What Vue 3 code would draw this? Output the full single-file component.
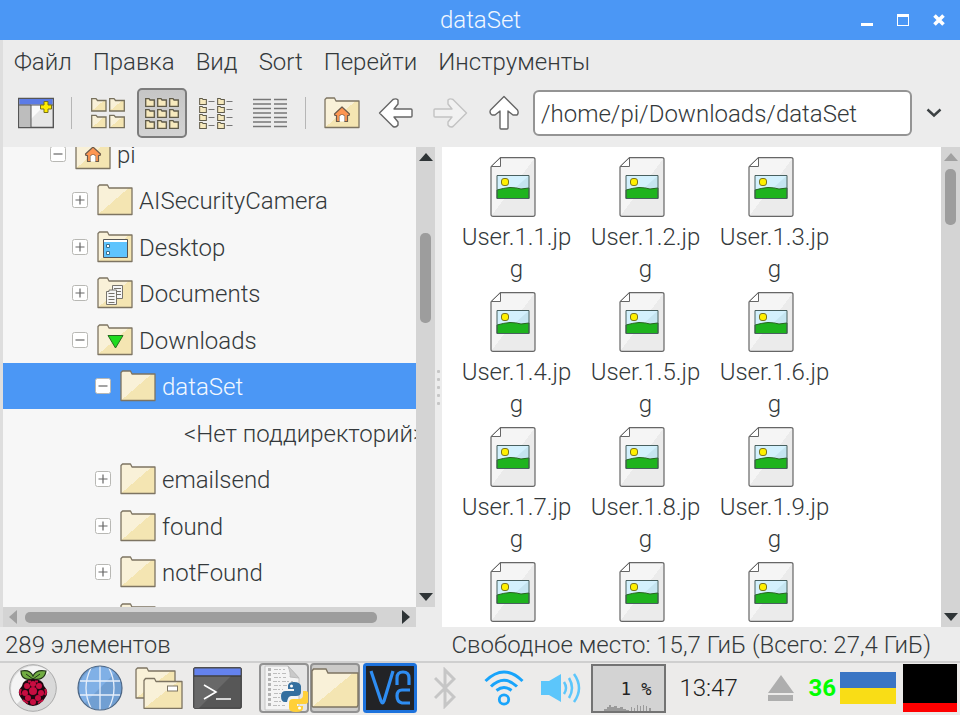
<script setup>
import { ref } from 'vue'

const path = ref('/home/pi/Downloads/dataSet')
const menus = ['Файл', 'Правка', 'Вид', 'Sort', 'Перейти', 'Инструменты']

const tree = [
  { name: 'pi', level: 0, open: true, emblem: 'home' },
  { name: 'AISecurityCamera', level: 1 },
  { name: 'Desktop', level: 1, emblem: 'desktop' },
  { name: 'Documents', level: 1, emblem: 'documents' },
  { name: 'Downloads', level: 1, open: true, emblem: 'downloads' },
  { name: 'dataSet', level: 2, open: true, selected: true },
  { name: '<Нет поддиректорий>', level: 3, empty: true },
  { name: 'emailsend', level: 2 },
  { name: 'found', level: 2 },
  { name: 'notFound', level: 2 },
  { name: '', level: 2 }
]

const named = Array.from({ length: 9 }, (_, i) => `User.1.${i + 1}.jpg`)
const files = [...named, '', '', '']
const small = [0, 12, 24]
const listRows = [0, 1, 2, 3]
const drupelets = [
  [24, 20, 3], [18, 22, 3], [30, 22, 3], [24, 27, 4], [16, 29, 3], [32, 29, 3],
  [19, 34, 3], [29, 34, 3], [24, 38, 3]
]
</script>

<template>
  <div class="desktop">
    <svg class="defs" aria-hidden="true">
      <defs>
        <linearGradient id="paper" x1="0" y1="0" x2="1" y2="1">
          <stop offset="0.5" stop-color="#f5f5f5" /><stop offset="0.5" stop-color="#ebebeb" />
        </linearGradient>
        <linearGradient id="manila" x1="0" y1="0" x2="1" y2="1">
          <stop offset="0.5" stop-color="#f9f1d8" /><stop offset="0.5" stop-color="#f4e5b2" />
        </linearGradient>
        <symbol id="folder" viewBox="0 0 36 32">
          <path d="M1 2.500 2.500 1H10.500L12 4H35V30.500H1Z" fill="url(#manila)" stroke="#7d7462" stroke-width="1.300" stroke-linejoin="round" />
        </symbol>
        <symbol id="house" viewBox="0 0 18 18">
          <path d="M9 1 1.500 8 2 9.500H3.500V15.500H6.500V10.500L8 9H10L11.500 10.500V15.500H14.500V9.500H16L16.500 8Z" fill="#fd9652" stroke="#6c5a4b" stroke-width="1.200" stroke-linejoin="round" />
          <path d="M6.500 15.500V10.500L8 9H10L11.500 10.500V15.500Z" fill="#fff" />
        </symbol>
        <symbol id="mini" viewBox="0 0 10 9">
          <path d="M.7 .7H4L5 2H9.300V8.300H.7Z" fill="#f6e9bd" stroke="#5f5a48" stroke-width="1.300" />
        </symbol>
        <symbol id="arrow" viewBox="0 0 36 32">
          <path d="M1.500 16 15 2.500Q18 1 20 3V7L16 12H33Q34 12 34 13V19Q34 20 33 20H16L20 25V28Q18 31 15 29.500Z" fill="#fff" stroke="#666" stroke-width="1.400" stroke-linejoin="round" />
        </symbol>
      </defs>
    </svg>

    <header class="titlebar">
      <h1>dataSet</h1>
      <div class="winbtns">
        <button aria-label="Minimize"><svg width="12" height="12"><path d="M0 9h12v3H0z" fill="#fff" /></svg></button>
        <button aria-label="Maximize"><svg width="12" height="12"><path d="M0 0h12v12H0zM1 3v8h10V3z" fill="#fff" fill-rule="evenodd" /></svg></button>
        <button aria-label="Close"><svg width="12" height="12"><path d="M1.500 1.500 10.500 10.500M10.500 1.500 1.500 10.500" stroke="#fff" stroke-width="3.600" /></svg></button>
      </div>
    </header>

    <nav class="menubar">
      <button v-for="m in menus" :key="m">{{ m }}</button>
    </nav>

    <div class="toolbar">
      <button class="tool" aria-label="New window">
        <svg width="36" height="32" viewBox="0 0 36 32">
          <path d="M.7 1.500H35.300V30.500H.7Z" fill="#e6e6e6" stroke="#555" stroke-width="1.400" />
          <path d="M1.400 7H13V30H1.400Z" fill="#bdbdbd" /><path d="M13 7H28L13 22Z" fill="#fafafa" />
          <path d="M1.400 2H34.600V7.500H1.400Z" fill="#5b7be6" /><path d="M1 8H35M13 8V30" stroke="#555" />
          <path d="M26 4.500H30V8H33.500V12H30V15.500H26V12H22.500V8H26Z" fill="#ffec00" stroke="#77701a" />
        </svg>
      </button>
      <span class="sep"></span>
      <button class="tool" aria-label="Icon view">
        <svg width="34" height="32" viewBox="0 0 34 32">
          <g fill="url(#manila)" stroke="#77705c" stroke-width="1.300">
            <path d="M.7 1.700H5L6.500 3.500H15V14H.7Z" /><path d="M18.700 1.700H23L24.500 3.500H33.300V14H18.700Z" />
            <path d="M.7 18.300H5L6.500 20H15V30.700H.7Z" /><path d="M18.700 18.300H23L24.500 20H33.300V30.700H18.700Z" />
          </g>
        </svg>
      </button>
      <button class="tool pressed" aria-label="Small icon view" aria-pressed="true">
        <svg width="34" height="32" viewBox="0 0 34 32">
          <template v-for="y in small" :key="y">
            <use v-for="x in small" :key="x" href="#mini" :x="x" :y="y - y / 12 + 1" width="10" height="9" />
          </template>
        </svg>
      </button>
      <button class="tool" aria-label="Compact view">
        <svg width="34" height="32" viewBox="0 0 34 32">
          <g v-for="r in listRows" :key="r">
            <use href="#mini" x="0" :y="r * 8 + 1" width="8" height="7" />
            <use href="#mini" x="18" :y="r * 8 + 1" width="8" height="7" />
            <path :d="`M9.500 ${r * 8 + 4.500}h6M27.500 ${r * 8 + 4.500}h6`" stroke="#777" />
          </g>
        </svg>
      </button>
      <button class="tool" aria-label="Detailed view">
        <svg width="34" height="32" viewBox="0 0 34 32">
          <path d="M0 2.500H18M21 2.500H34M0 7H18M21 7H34M0 11.500H18M21 11.500H34M0 16H18M21 16H34M0 20.500H18M21 20.500H34M0 25H18M21 25H34M0 29.500H18M21 29.500H34" stroke="#777" stroke-width="1.300" />
        </svg>
      </button>
      <span class="sep"></span>
      <button class="tool" aria-label="Home">
        <svg width="36" height="32" viewBox="0 0 36 32"><use href="#folder" width="36" height="32" /><use href="#house" x="9" y="9" width="18" height="18" /></svg>
      </button>
      <button class="tool" aria-label="Back"><svg width="36" height="32"><use href="#arrow" width="36" height="32" /></svg></button>
      <button class="tool faded" aria-label="Forward"><svg width="36" height="32" viewBox="0 0 36 32"><use href="#arrow" width="36" height="32" transform="matrix(-1 0 0 1 36 0)" /></svg></button>
      <button class="tool" aria-label="Up"><svg width="32" height="36" viewBox="0 0 32 36"><use href="#arrow" width="36" height="32" transform="matrix(0 1 -1 0 32 0)" /></svg></button>
      <input v-model="path" class="address" type="text" aria-label="Path" />
      <button class="drop" aria-label="Path history"><svg width="16" height="10"><path d="M1.500 1.500 8 7.500 14.500 1.500" fill="none" stroke="#3c4143" stroke-width="2.400" /></svg></button>
    </div>

    <main class="panes">
      <section class="side">
        <ul class="tree">
          <li v-for="(n, i) in tree" :key="i" :class="['node', 'l' + n.level, { selected: n.selected }]">
            <button v-if="!n.empty" class="expander" :aria-label="n.open ? 'Collapse' : 'Expand'">
              <svg width="16" height="16" viewBox="0 0 16 16">
                <rect x=".5" y=".5" width="15" height="15" rx="2" fill="#fff" stroke="#b8b8b4" />
                <path :d="n.open ? 'M3.500 8H12.500' : 'M3.500 8H12.500M8 3.500V12.500'" stroke="#666" stroke-width="1.200" />
              </svg>
            </button>
            <svg v-if="!n.empty" class="folder" width="36" height="32" viewBox="0 0 36 32">
              <use href="#folder" width="36" height="32" />
              <use v-if="n.emblem === 'home'" href="#house" x="9" y="8" width="18" height="18" />
              <g v-if="n.emblem === 'desktop'">
                <path d="M6.500 8.500H30.500V26.500H6.500Z" fill="#5fc4fd" stroke="#555" /><path d="M7 9H30V11H7Z" fill="#fff" />
                <path d="M9.500 13.500H12.500V16.500H9.500ZM9.500 20.500H12.500V23.500H9.500Z" fill="#fff" stroke="#39708c" />
              </g>
              <g v-if="n.emblem === 'documents'" fill="#f6f6f6" stroke="#77746c">
                <path d="M15.500 8.500H25.500V21.500H15.500Z" /><path d="M17 11.500H24M19 14.500H24M19 17.500H24" />
                <path d="M9.500 14.500H12V13H19.500V27.500H9.500Z" /><path d="M11.500 16.500H17.500M11.500 19.500H17.500M11.500 22.500H17.500M11.500 25.500H17.500" />
              </g>
              <path v-if="n.emblem === 'downloads'" d="M11 11.500H26L18.500 24Z" fill="#1fdb1f" stroke="#276a20" />
            </svg>
            <span v-if="n.name" class="label">{{ n.name }}</span>
          </li>
        </ul>
        <div class="vbar">
          <button aria-label="Scroll up"><svg width="14" height="8"><path d="M0 8 7 0 14 8Z" fill="#2e3436" /></svg></button>
          <div class="track"><i class="thumb tree-thumb"></i></div>
          <button aria-label="Scroll down"><svg width="14" height="8"><path d="M0 0H14L7 8Z" fill="#2e3436" /></svg></button>
        </div>
        <div class="hbar">
          <button aria-label="Scroll left"><svg width="8" height="14"><path d="M8 0V14L0 7Z" fill="#a0a0a0" /></svg></button>
          <div class="htrack"><i class="hthumb"></i></div>
          <button aria-label="Scroll right"><svg width="8" height="14"><path d="M0 0V14L8 7Z" fill="#2e3436" /></svg></button>
        </div>
      </section>

      <div class="grip"><i></i><i></i><i></i><i></i><i></i></div>

      <section class="view">
        <ul class="files">
          <li v-for="(f, i) in files" :key="i">
            <svg width="46" height="60" viewBox="0 0 46 60">
              <path d="M10.500 .7H43Q45 .7 45 2.500V57.500Q45 59.300 43 59.300H3Q1 59.300 1 57.500V10Z" fill="url(#paper)" stroke="#666" stroke-width="1.200" />
              <path d="M10.500 .7V9.500H1.200Z" fill="#fff" stroke="#666" />
              <path d="M7 18.500H39V41.500H7Z" fill="#d3f1fd" /><path d="M39 18.500V32H24Z" fill="#c5e5f0" />
              <path d="M7 33Q14 31 20 30.500Q26 30.500 31 32L39 31V41.500H7Z" fill="#1eb31e" stroke="#27631f" />
              <path d="M7 18.500H39V41.500H7Z" fill="none" stroke="#48605f" />
              <rect x="11.500" y="21.500" width="7" height="7" rx="2.500" fill="#fff000" stroke="#7b7420" />
            </svg>
            <span v-if="f">{{ f }}</span>
          </li>
        </ul>
        <div class="vbar">
          <button aria-label="Scroll up"><svg width="14" height="8"><path d="M0 8 7 0 14 8Z" fill="#a0a0a0" /></svg></button>
          <div class="track"><i class="thumb file-thumb"></i></div>
          <button aria-label="Scroll down"><svg width="14" height="8"><path d="M0 0H14L7 8Z" fill="#2e3436" /></svg></button>
        </div>
      </section>
    </main>

    <footer class="status">
      <span>289 элементов</span>
      <span>Свободное место: 15,7 ГиБ (Всего: 27,4 ГиБ)</span>
    </footer>

    <div class="taskbar">
      <div class="launchers">
        <button aria-label="Menu">
          <svg width="48" height="48" viewBox="0 0 48 48">
            <circle cx="24" cy="24" r="23.300" fill="#d9d9d9" stroke="#aaa" /><path d="M7.900 40.100A22.800 22.800 0 0 1 40.100 7.900Z" fill="#f4f4f4" />
            <path d="M24 15C18 16 12 15 12 7Q21 5 24 12Q27 5 37 7C36 15 30 16 24 15Z" fill="#71ad42" stroke="#23351a" stroke-width="1.200" />
            <path d="M17 10 24 15 31 10" fill="none" stroke="#23351a" />
            <path d="M24 15Q34 15 35 22Q41 28 36 34Q32 41 24 42Q16 41 12 34Q7 28 13 22Q14 15 24 15Z" fill="#1f0710" />
            <circle v-for="(d, k) in drupelets" :key="k" :cx="d[0]" :cy="d[1]" :r="d[2]" fill="#c80d41" />
            <path d="M12 25Q10 28 12 31M36 25Q38 28 36 31M14 36Q17 38 19 39M34 36Q31 38 29 39M19 17.500H22M26 17.500H29" stroke="#c80d41" stroke-width="2" fill="none" />
          </svg>
        </button>
        <button class="globe" aria-label="Web browser">
          <svg width="46" height="46" viewBox="0 0 46 46">
            <circle cx="23" cy="23" r="22" fill="#719fd2" /><path d="M7.500 38.500A22 22 0 0 1 38.500 7.500Z" fill="#80b0e6" />
            <path d="M23 1V45M3 16H43M3 30H43M14 3Q4 23 14 43M32 3Q42 23 32 43" fill="none" stroke="#e7effa" stroke-width="1.300" />
            <circle cx="23" cy="23" r="22" fill="none" stroke="#4d6684" stroke-width="1.200" />
          </svg>
        </button>
        <button class="cabinet" aria-label="File manager">
          <svg width="48" height="42" viewBox="0 0 48 42">
            <g fill="url(#manila)" stroke="#7d7462" stroke-width="1.300" stroke-linejoin="round">
              <path d="M1 2.500 2.500 1H12L13.500 4H40V31H1Z" /><path d="M9 13.500 10.500 11.500H19.500L21 14.500H47V41.300H9Z" />
            </g>
            <rect x="32.500" y="19" width="10" height="5" fill="#fff" stroke="#7d7462" />
          </svg>
        </button>
        <button aria-label="Terminal">
          <svg width="49" height="42" viewBox="0 0 49 42">
            <rect x=".7" y=".7" width="47.600" height="40.600" rx="1" fill="#575757" stroke="#333" />
            <path d="M1.400 9H38L6 41H1.400Z" fill="#686868" /><path d="M1.400 1.400H47.600V8.500H1.400Z" fill="#6482ee" /><path d="M1 9H48" stroke="#333" />
            <path d="M11 18 23 25 11 32M23 32H38" fill="none" stroke="#fff" stroke-width="1.600" />
          </svg>
        </button>
      </div>
      <div class="tasks">
        <button class="task" aria-label="Python editor">
          <svg width="48" height="48" viewBox="0 0 48 48">
            <path d="M5 2H28L39 14V46H5Z" fill="#f4f4f4" stroke="#c4c4c4" /><path d="M28 2Q31 10 30 13L39 14Z" fill="#c9c9c9" stroke="#bbb" />
            <path d="M8 5.500H11M8 10.500H11M8 15.500H11M8 20.500H11M8 25.500H11M8 30.500H11M8 35.500H11M8 40.500H11" stroke="#b4b4b4" stroke-width="3" />
            <path d="M14 5.500H25M13 9.500H27M14 13.500H26M13 17.500H33M14 21.500H30M13 25.500H23M14 29.500H21M13 33.500H20M14 37.500H22M13 41.500H25" stroke="#bdbdbd" stroke-dasharray="4 1 2 2" />
            <path d="M28 25V22Q28 18 34 18T41 22V28Q41 32 36 32H31Q28 32 27 38H25Q21 38 21 32Q21 27 26 27H34V25Z" fill="#346f9f" />
            <path d="M43 27H46Q50 28 50 33T46 40H37V42H43V44Q43 48 36 48T29 44V39Q29 35 33 35H39Q43 35 43 31Z" fill="#ffd039" />
            <circle cx="31.500" cy="22" r="1.500" fill="#fff" /><circle cx="39.500" cy="44" r="1.500" fill="#fff" />
          </svg>
        </button>
        <button class="task active" aria-label="dataSet">
          <svg width="48" height="40" viewBox="0 0 48 40"><path d="M1 3 2.500 1H15L17 5H47V37L46 39H2L1 38Z" fill="url(#manila)" stroke="#7d7462" stroke-width="1.400" /></svg>
        </button>
      </div>
      <div class="tray">
        <button aria-label="VNC">
          <svg width="54" height="50" viewBox="0 0 54 50">
            <rect x="1.500" y="1.500" width="51" height="47" rx="2" fill="#222326" stroke="#1d72dc" stroke-width="3" />
            <path d="M8 8 18 38Q19.500 42 21 38L30 8M34 22V15Q34 9 40 9Q46 9 46 15V22M47 27H39Q34 27 34 33T39 40H47" fill="none" stroke="#2e8df2" stroke-width="3.200" />
          </svg>
        </button>
        <svg class="bt" width="22" height="42" viewBox="0 0 22 42"><path d="M1 11 20 30 11 39V3L20 12 1 31" fill="none" stroke="#c6c6c6" stroke-width="3" /></svg>
        <svg class="wifi" width="40" height="36" viewBox="0 0 40 36">
          <path d="M1.500 11Q20-7 38.500 11M7 16.500Q20 4 33 16.500M12.500 20.500Q20 14.500 27.500 20.500" fill="none" stroke="#18a4fb" stroke-width="3" /><circle cx="20" cy="29.500" r="4.700" fill="none" stroke="#18a4fb" stroke-width="2.800" />
        </svg>
        <svg class="vol" width="40" height="30" viewBox="0 0 40 30">
          <path d="M0 8H8L20 1V29L8 22H0Z" fill="#5cc6fb" /><path d="M23 9Q27 15 23 21M28 5Q34 15 28 25M33 1Q43 15 33 29" fill="none" stroke="#5cc6fb" stroke-width="2.500" />
        </svg>
        <div class="cpu">
          <span>1 %</span>
          <svg width="50" height="7" viewBox="0 0 50 7"><path d="M0 7V5H3V3H5V1H7V3H10V2H13V4H16V3H19V5H22V6H25V7H27V3H28V7H30V4H31V7H33V1H34V7H36V2H37V7H39V1H40V7H42V2H43V7H45V4H47V7Z" fill="#9a9a9a" /></svg>
        </div>
        <time>13:47</time>
        <svg class="eject" width="26" height="26"><path d="M13 0 26 18H0ZM0 20H25V26H0Z" fill="#aeaeae" /></svg>
        <b>36</b>
        <i class="flag"></i>
        <i class="load"></i>
      </div>
    </div>
  </div>
</template>

<style>
body { margin: 0; overflow: hidden; }
</style>

<style scoped>
* { box-sizing: border-box; }
.desktop {
  display: flex; flex-direction: column; height: 100vh; background: #ececec; color: #34393b;
  font-family: Roboto, "Noto Sans", sans-serif; font-size: 24px; font-weight: 300; line-height: 32px;
}
.defs { position: absolute; width: 0; height: 0; }
svg { display: block; flex: none; }
button { display: flex; align-items: center; justify-content: center; padding: 0; border: 0; background: none; color: inherit; font: inherit; }
ul { margin: 0; padding: 0; list-style: none; }

.titlebar { display: flex; align-items: center; height: 40px; flex: none; background: #4b97f5; color: #f2f7ff; padding: 0 15px 0 100px; }
.titlebar h1 { flex: 1; margin: 0; text-align: center; font-size: 24px; font-weight: 300; }
.winbtns { display: flex; gap: 24px; }

.menubar, .toolbar, .panes { border-left: 3px solid #dedede; }
.menubar { display: flex; gap: 21px; height: 42px; flex: none; padding: 2px 0 0 11px; }
.toolbar { display: flex; align-items: center; gap: 4px; height: 65px; flex: none; padding: 0 19px 3px 8px; }
.tool { width: 50px; height: 50px; flex: none; }
.pressed { background: linear-gradient(#c6c6c6, #d3d3d3); border: 2px solid #7c7c7c; border-radius: 5px; }
.faded { opacity: 0.3; }
.sep { width: 14px; height: 32px; flex: none; background: linear-gradient(#b6b6b6, #b6b6b6) 6px 0 / 1px 100% no-repeat; }
.address {
  flex: 1; min-width: 0; height: 46px; padding: 2px 6px 0; border: 2px solid #949494; border-radius: 6px;
  background: #fff; color: inherit; font: inherit;
}
.drop { width: 28px; height: 40px; margin-left: 4px; margin-right: -7px; }

.panes { display: flex; flex: 1; min-height: 0; }
.side { display: grid; grid-template: minmax(0, 1fr) 20px / minmax(0, 1fr) 19px; flex: 432 1 0; min-width: 0; }
.tree { display: grid; grid-auto-rows: 47px 46px; align-content: start; overflow: hidden; background: #f7f7f7; }
.node { display: flex; align-items: center; margin-top: -17px; margin-bottom: 17px; white-space: nowrap; }
.l0 { padding-left: 47px; }
.l1 { padding-left: 69px; }
.l2 { padding-left: 92px; }
.l3 { padding-left: 175px; }
.selected { background: #4b97f5; color: #f2f7ff; }
.expander { width: 16px; flex: none; }
.folder { margin-left: 9px; }
.label { margin-left: 6px; padding-top: 2px; }

.vbar { display: flex; flex-direction: column; width: 19px; flex: none; background: #d4d4d4; }
.vbar button { height: 20px; flex: none; }
.track { flex: 1; display: flex; justify-content: center; }
.thumb { width: 11px; border-radius: 5px; background: #9d9d9d; }
.tree-thumb { height: 90px; margin-top: 66px; }
.file-thumb { height: 56px; margin-top: 2px; }
.hbar { display: flex; background: #d4d4d4; }
.hbar button { width: 20px; flex: none; }
.htrack { flex: 1; display: flex; align-items: center; padding-left: 2px; }
.hthumb { width: 95%; height: 11px; border-radius: 5px; background: #9d9d9d; }
.grip { display: flex; flex-direction: column; align-items: center; justify-content: center; gap: 5px; width: 7px; flex: none; }
.grip i { width: 3px; height: 3px; border-radius: 1px; background: #c6c6c6; }

.view { display: flex; flex: 518 1 0; min-width: 0; background: #fff; }
.files { flex: 1; display: grid; grid-template-columns: repeat(auto-fill, 129px); grid-auto-rows: 135px; align-content: start; overflow: hidden; padding: 10px 0 0 10px; }
.files li { display: flex; flex-direction: column; align-items: center; gap: 4px; }
.files svg { margin-right: 8px; }
.files span { width: 117px; text-align: center; word-break: break-all; }

.status { display: flex; justify-content: space-between; height: 36px; flex: none; padding: 2px 29px 0 5px; border-bottom: 2px solid #cfcfcf; white-space: nowrap; }

.taskbar { display: flex; align-items: center; height: 52px; flex: none; padding: 0 3px 2px 9px; background: #ecebea; }
.launchers { display: flex; align-items: center; }
.globe { margin-left: 20px; }
.cabinet { margin: 0 10px 0 12px; }
.tasks { display: flex; gap: 1px; margin-left: 17px; }
.task { width: 50px; height: 50px; border: 2px solid #929292; border-radius: 4px; background: #e5e5e5; }
.task.active { background: #cbcac8; }
.tray { display: flex; align-items: center; margin-left: auto; }
.bt { margin-left: 17px; }
.wifi { margin-left: 28px; }
.vol { margin-left: 17px; }
.cpu { display: flex; flex-direction: column; align-items: center; justify-content: flex-end; width: 75px; height: 49px; margin-left: 10px; border: 2px solid #737373; background: #d3d3d3; }
.cpu span { align-self: flex-end; margin-right: 13px; font: 17px/30px "DejaVu Sans Mono", monospace; color: #222; }
time { width: 72px; padding-left: 13px; color: #222; }
.eject { margin-left: 30px; }
.tray b { margin-left: 14px; color: #0f0; font-weight: 700; }
.flag { width: 56px; height: 32px; margin-left: 4px; background: linear-gradient(#3a75c4 50%, #f9dd16 50%); }
.load { width: 54px; height: 48px; margin-left: 7px; background: linear-gradient(#000 39px, #f00 39px); }
</style>
